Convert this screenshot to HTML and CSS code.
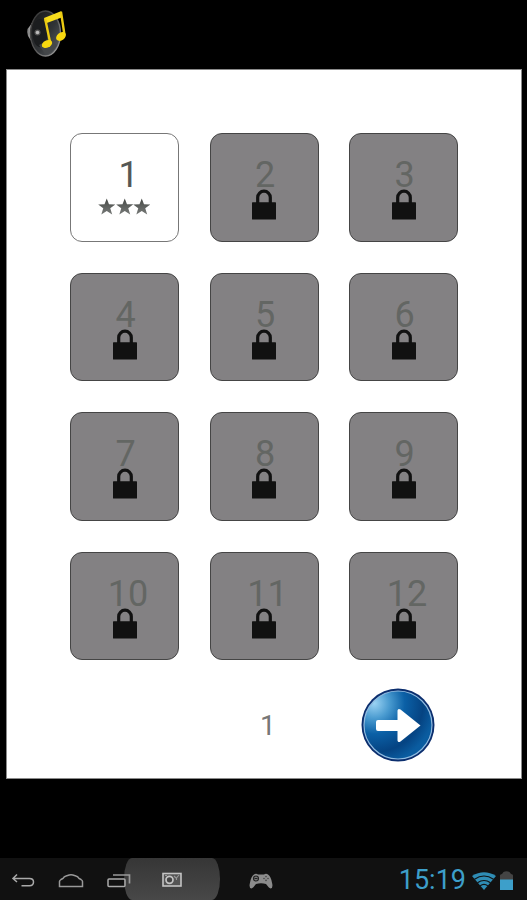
FILE: index.html
```
<!DOCTYPE html>
<html lang="en">
<head>
    <meta charset="UTF-8">
    <meta name="viewport" content="width=device-width, initial-scale=1.0">
    <title>Levels</title>
    <link rel="stylesheet" href="styles.css">
</head>
<body>
    <!-- shared icons -->
    <svg class="defs" width="0" height="0">
        <symbol id="lock" viewBox="0 0 24 31">
            <path d="M5.700 15V8.500a6.300 6.300 0 0 1 12.600 0V15" fill="none" stroke="#111" stroke-width="3.200"/>
            <rect x="0" y="13.300" width="24" height="17.200" rx="0.600" fill="#111"/>
        </symbol>
        <symbol id="star" viewBox="0 0 18 18">
            <path d="M9 .2l2.300 6 6.500.1-5.200 4 2 6.500L9 13.200l-5.600 3.600 2-6.500-5.200-4 6.500-.1z" fill="url(#starFill)"/>
        </symbol>
        <linearGradient id="starFill" x1="0" y1="0" x2="0" y2="1">
            <stop offset="0" stop-color="#474a47"/>
            <stop offset="1" stop-color="#777a78"/>
        </linearGradient>
    </svg>

    <header class="topbar">
        <svg class="logo" width="42" height="50" viewBox="0 0 42 50">
            <defs>
                <linearGradient id="rim" x1="0" y1="0" x2="1" y2="1">
                    <stop offset="0" stop-color="#333"/>
                    <stop offset="0.5" stop-color="#555"/>
                    <stop offset="1" stop-color="#aaa"/>
                </linearGradient>
                <linearGradient id="cone" x1="0" y1="0" x2="1" y2="1">
                    <stop offset="0" stop-color="#151515"/>
                    <stop offset="0.55" stop-color="#303336"/>
                    <stop offset="1" stop-color="#606468"/>
                </linearGradient>
                <linearGradient id="side" x1="0" y1="0" x2="1" y2="0">
                    <stop offset="0" stop-color="#777"/>
                    <stop offset="0.5" stop-color="#ccc"/>
                    <stop offset="1" stop-color="#444"/>
                </linearGradient>
            </defs>
            <path d="M9 12Q6 18 2.500 22Q1.500 25 3 29Q7 34 9 41L15 30z" fill="url(#side)"/>
            <ellipse cx="20.500" cy="26.500" rx="15" ry="22.500" fill="url(#cone)" stroke="url(#rim)" stroke-width="1.400"/>
            <ellipse cx="15" cy="26" rx="7.500" ry="14" fill="#1b1d1f"/>
            <path d="M14 38L20 47Q27 47 32 38L24 33z" fill="#444749"/>
            <circle cx="12.500" cy="25.500" r="3" fill="#555"/>
            <circle cx="12.500" cy="25.500" r="1.800" fill="#bbb"/>
            <path d="M19 11L36.500 4V10.500L20.500 16.500z" fill="#f7dc1c"/>
            <path d="M20.200 12L25.200 36M36 5L39.500 28" fill="none" stroke="#eccb12" stroke-width="2.400"/>
            <ellipse cx="22" cy="37" rx="5.400" ry="3.600" fill="#f8d80f" transform="rotate(-24 22 37)"/>
            <ellipse cx="36" cy="29.500" rx="5.400" ry="3.800" fill="#f8d80f" transform="rotate(-38 36 29.500)"/>
        </svg>
    </header>

    <main class="panel">
        <div class="levels">
            <div class="level open">
                <span class="num">1</span>
                <div class="stars">
                    <svg><use href="#star"/></svg>
                    <svg><use href="#star"/></svg>
                    <svg><use href="#star"/></svg>
                </div>
            </div>
            <div class="level"><span class="num">2</span><svg class="lock"><use href="#lock"/></svg></div>
            <div class="level"><span class="num">3</span><svg class="lock"><use href="#lock"/></svg></div>
            <div class="level"><span class="num">4</span><svg class="lock"><use href="#lock"/></svg></div>
            <div class="level"><span class="num">5</span><svg class="lock"><use href="#lock"/></svg></div>
            <div class="level"><span class="num">6</span><svg class="lock"><use href="#lock"/></svg></div>
            <div class="level"><span class="num">7</span><svg class="lock"><use href="#lock"/></svg></div>
            <div class="level"><span class="num">8</span><svg class="lock"><use href="#lock"/></svg></div>
            <div class="level"><span class="num">9</span><svg class="lock"><use href="#lock"/></svg></div>
            <div class="level"><span class="num two">10</span><svg class="lock"><use href="#lock"/></svg></div>
            <div class="level"><span class="num two">11</span><svg class="lock"><use href="#lock"/></svg></div>
            <div class="level"><span class="num two">12</span><svg class="lock"><use href="#lock"/></svg></div>
        </div>

        <div class="pager">
            <span class="page">1</span>
            <svg class="next" width="74" height="74" viewBox="0 0 74 74">
                <defs>
                    <radialGradient id="ball" cx="0.150" cy="0.180" r="0.900">
                        <stop offset="0" stop-color="#9bd3f3"/>
                        <stop offset="0.25" stop-color="#4a9bd0"/>
                        <stop offset="0.5" stop-color="#0b60a6"/>
                        <stop offset="0.8" stop-color="#054382"/>
                        <stop offset="1" stop-color="#0a5ca0"/>
                    </radialGradient>
                </defs>
                <circle cx="37" cy="37" r="36.500" fill="#0b2e6e"/>
                <circle cx="37" cy="37" r="34" fill="url(#ball)" stroke="#8fbbe0" stroke-width="1.200"/>
                <path d="M17 32H36.500V22.500Q37 20 39.500 21.500L59.500 37.500L39.500 53.500Q37 55 36.500 52.500V43H17Q15 43 15 41V34Q15 32 17 32z" fill="#fff"/>
            </svg>
        </div>
    </main>

    <footer class="navbar">
        <div class="keys">
            <svg width="24" height="16" viewBox="0 0 24 16">
                <path d="M6 1.500L2 5.500L6 9M2 5.500H18.500Q22.500 5.500 22.500 9T18.500 12.800H10.500" fill="none" stroke="#aaa" stroke-width="1.500"/>
            </svg>
            <svg width="26" height="16" viewBox="0 0 26 16">
                <path d="M1.500 13.500V8.500Q1.500 7.500 3 6.500L5 5.500Q6 3.500 8 3L9.500 2.500Q13 .8 16.500 2.500L18 3Q20 3.500 21 5.500L23 6.500Q24.500 7.500 24.500 8.500V13.500z" fill="none" stroke="#999" stroke-width="1.500"/>
            </svg>
            <svg width="24" height="16" viewBox="0 0 24 16">
                <rect x="1" y="6" width="17" height="7.500" rx="1" fill="none" stroke="#aaa" stroke-width="1.500"/>
                <path d="M6 2H22.500V10.500" fill="none" stroke="#999" stroke-width="1.700"/>
            </svg>
        </div>
        <div class="pressed">
            <svg width="20" height="16" viewBox="0 0 20 16">
                <rect x="1" y="1.500" width="18" height="12.500" fill="#555" stroke="#c4c4c4" stroke-width="1.600"/>
                <circle cx="7.500" cy="7.800" r="3.500" fill="#444" stroke="#c4c4c4" stroke-width="1.700"/>
                <path d="M3 3.500H5M12 4L14 6M17 3L14.500 6V8" fill="none" stroke="#999" stroke-width="1.100"/>
            </svg>
        </div>
        <svg class="pad" width="24" height="16" viewBox="0 0 24 16">
            <path d="M5 1.500Q7 0 9 1.500H15Q17 0 19 1.500Q22 3 23.300 11Q24 15.500 21.500 15.500Q20 15 17 11Q12 9.500 7 11Q4 15 2.500 15.500Q0 15.500 .7 11Q2 3 5 1.500z" fill="#8c8c8c"/>
            <circle cx="7" cy="5.500" r="2.500" fill="#777" stroke="#222" stroke-width="1.100"/>
            <path d="M5.500 5.500H8.500" stroke="#222"/>
            <g fill="#444">
                <circle cx="17" cy="3.600" r=".8"/>
                <circle cx="15" cy="5.500" r=".8"/>
                <circle cx="19" cy="5.500" r=".8"/>
                <circle cx="17" cy="7.400" r=".8"/>
            </g>
        </svg>
        <div class="status">
            <span class="clock">15:19</span>
            <svg width="24" height="18" viewBox="0 0 24 18">
                <path d="M0 4Q12-3.500 24 4L12 18z" fill="#2f8db5"/>
                <path d="M2.500 7.200Q12 .8 21.500 7.200M5.500 10.700Q12 6.200 18.500 10.700M8.200 13.800Q12 11 15.800 13.800" fill="none" stroke="#111" stroke-width="1.100"/>
            </svg>
            <svg width="13" height="19" viewBox="0 0 13 19">
                <path d="M0 19V4.500Q0 3 2 3L3.500 1Q6.500-.5 9.500 1L11 3Q13 3 13 4.500V19z" fill="#444"/>
                <rect x="0" y="8.500" width="13" height="10.500" fill="#3d9fca"/>
            </svg>
        </div>
    </footer>
</body>
</html>
```
FILE: styles.css
```
* {
  box-sizing: border-box;
}

body {
  margin: 0;
  height: 900px;
  background-color: #000;
  font-family: Roboto, "Liberation Sans", sans-serif;
  display: flex;
  flex-direction: column;
  overflow: hidden;
}

svg {
  display: block;
  flex-shrink: 0;
}

.defs {
  position: absolute;
}

.topbar {
  height: 69px;
  padding: 7px 0 0 25px;
}

.panel {
  width: 516px;
  height: 710px;
  margin-left: 6px;
  padding: 63px 0 0 63px;
  background-color: #fff;
  border: 1px solid #8a8a8a;
}

/* level tiles */
.levels {
  display: grid;
  grid-template-columns: repeat(3, 109px);
  grid-auto-rows: 108.5px;
  column-gap: 30.5px;
  row-gap: 31px;
}

.level {
  display: flex;
  flex-direction: column;
  align-items: center;
  padding-top: 21px;
  background-color: #838183;
  border: 1.5px solid #454545;
  border-radius: 12px;
}

.num {
  height: 35px;
  padding-left: 2px;
  font-size: 36px;
  line-height: 40px;
  color: #636663;
}

.num.two {
  padding-left: 7px;
}

.lock {
  width: 24px;
  height: 31px;
  margin-top: -1px;
}

.level.open {
  background-color: #fff;
  border-color: #777;
}

.open .num {
  height: 43px;
  padding-left: 8px;
  color: #555855;
}

.stars {
  display: flex;
}

.stars svg {
  width: 17.5px;
  height: 18px;
}

/* page number and next button */
.pager {
  display: flex;
  align-items: center;
  margin-top: 28px;
  padding-left: 190px;
}

.page {
  width: 101px;
  padding-top: 2px;
  font-size: 28px;
  line-height: 32px;
  color: #777;
}

/* system bar */
.navbar {
  display: flex;
  align-items: center;
  height: 42px;
  margin-top: auto;
  background-color: #111;
}

/* the last key runs over the edge of the pressed area */
.keys {
  position: relative;
  z-index: 1;
  display: flex;
  gap: 23px;
  width: 124px;
  padding: 3px 0 0 11px;
}

.pressed {
  display: flex;
  align-items: center;
  justify-content: center;
  width: 96px;
  height: 42px;
  padding-top: 2px;
  border-radius: 8px / 21px;
  background: linear-gradient(#363636, #484848);
}

.pad {
  margin: 3px 0 0 29px;
}

.status {
  display: flex;
  align-items: center;
  margin-left: auto;
  padding: 3px 14px 0 0;
}

.clock {
  margin-right: 6px;
  font-size: 27px;
  line-height: 39px;
  color: #3d9fca;
}

.status svg:last-child {
  margin-left: 4px;
}
```
